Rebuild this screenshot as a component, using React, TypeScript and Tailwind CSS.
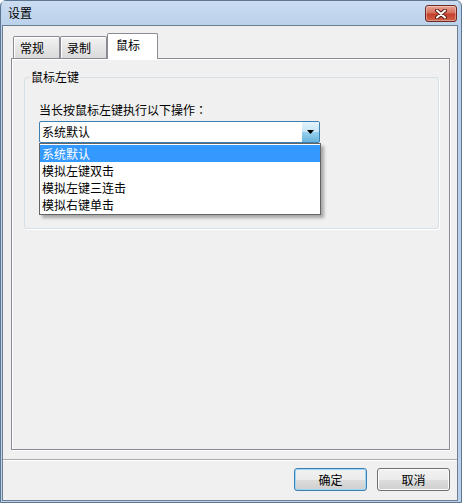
const options = ["系统默认", "模拟左键双击", "模拟左键三连击", "模拟右键单击"];

const CloseIcon = () => (
  <svg width="12" height="10" viewBox="0 0 12 10">
    <path d="M2 1.5 L10 8.5 M10 1.5 L2 8.5" stroke="#5a1f16" strokeWidth="4" strokeLinecap="round" />
    <path d="M2 1.5 L10 8.5 M10 1.5 L2 8.5" stroke="#ffffff" strokeWidth="2" strokeLinecap="round" />
  </svg>
);

const Tab = ({ label, active }: { label: string; active?: boolean }) => {
  if (active) {
    return (
      <div className="relative z-10 -mb-px h-[26px] w-[51px] rounded-t-[2px] border border-b-0 border-[#898c95] bg-white pl-[8px] pt-[4px] leading-[14px]">
        {label}
      </div>
    );
  }
  return (
    <div className="h-[22px] w-[47px] rounded-t-[2px] border border-b-0 border-[#898c95] bg-[linear-gradient(#f3f3f3,#e6e6e6_50%,#dadada)] pl-[6px] pt-[4px] leading-[14px] shadow-[inset_1px_1px_0_#fff]">
      {label}
    </div>
  );
};

const Button = ({ label, isDefault }: { label: string; isDefault?: boolean }) => (
  <button
    className={
      isDefault
        ? "h-[23px] w-[73px] rounded-[3px] border border-[#3c7fb1] bg-[linear-gradient(#f2f2f2,#ebebeb_50%,#dddddd_50%,#cfcfcf)] text-[12px] leading-[14px] text-black shadow-[inset_0_0_0_1px_#9fd6f5]"
        : "h-[23px] w-[73px] rounded-[3px] border border-[#707070] bg-[linear-gradient(#f2f2f2,#ebebeb_50%,#dddddd_50%,#cfcfcf)] text-[12px] leading-[14px] text-black shadow-[inset_0_0_0_1px_#fcfcfc]"
    }
  >
    {label}
  </button>
);

export default function App() {
  return (
    <div className="flex h-[503px] w-[462px] flex-col rounded-t-[6px] border border-[#5f7693] bg-[#b9d1ea] pb-px pl-px pr-[3px] font-['Noto_Sans_CJK_SC',sans-serif] text-[12px] text-black">
      {/* title bar */}
      <div className="flex h-[24px] items-start justify-between bg-[linear-gradient(#cadcf0,#bbd2eb)] pl-[6px] pr-px">
        <span className="pt-[5px] leading-[14px]">设置</span>
        <div className="mt-[4px] flex h-[17px] w-[32px] items-center justify-center rounded-[3px] border border-[#6e2a20] bg-[linear-gradient(#eaa596,#d66f5b_45%,#c4402a_55%,#d3634c)] shadow-[inset_0_0_0_1px_rgba(255,255,255,0.35)]">
          <CloseIcon />
        </div>
      </div>

      {/* client area */}
      <div className="flex flex-1 flex-col border border-[#6d7f95] bg-[#f0f0f0]">
        <div className="flex flex-col pb-[9px] pl-[8px] pr-[7px] pt-[7px]">
          <div className="flex h-[25px] items-end pl-[2px]">
            <Tab label="常规" />
            <Tab label="录制" />
            <Tab label="鼠标" active />
          </div>

          <div className="h-[392px] border border-[#898c95] bg-[#f0f0f0] pt-[11px] shadow-[inset_1px_1px_0_#fff,1px_1px_0_#fff]">
            <fieldset className="ml-[12px] mr-[10px] h-[159px] rounded-[3px] border border-[#d5dfe5] shadow-[1px_1px_0_#fff]">
              <legend className="ml-[5px] px-px leading-[14px]">鼠标左键</legend>
              <div className="pl-[14px] pt-[19px]">
                <div className="leading-[14px]">
                  当长按鼠标左键执行以下操作<span className="font-['Noto_Sans_CJK_JP',sans-serif]">：</span>
                </div>
                <div className="relative mt-[4px] flex h-[22px] w-[281px] rounded-[2px] border border-[#3c7fb1] bg-white">
                  <span className="flex-1 pl-[2px] leading-[20px]">系统默认</span>
                  <div className="flex w-[17px] items-center justify-center bg-[linear-gradient(#e5f4fc,#c4e5f6_50%,#98d1ef_50%,#68b3db)]">
                    <svg width="7" height="4" viewBox="0 0 7 4">
                      <path d="M0 0 H7 L3.5 4 Z" fill="#000" />
                    </svg>
                  </div>

                  <div className="absolute left-[-1px] top-[21px] z-20 w-[282px] border border-[#646464] bg-white py-px shadow-[3px_3px_3px_rgba(0,0,0,0.3)]">
                    {options.map((opt, i) => (
                      <div
                        key={i}
                        className={
                          i === 0
                            ? "h-[17px] bg-[#3399ff] pl-[2px] leading-[17px] text-white"
                            : "h-[17px] pl-[2px] leading-[17px]"
                        }
                      >
                        {opt}
                      </div>
                    ))}
                  </div>
                </div>
              </div>
            </fieldset>
          </div>
        </div>

        <div className="flex flex-1 justify-end gap-[10px] border-t border-[#a9a9a9] pb-[9px] pr-[7px] pt-[8px] shadow-[inset_0_1px_0_#fff]">
          <Button label="确定" isDefault />
          <Button label="取消" />
        </div>
      </div>
    </div>
  );
}
